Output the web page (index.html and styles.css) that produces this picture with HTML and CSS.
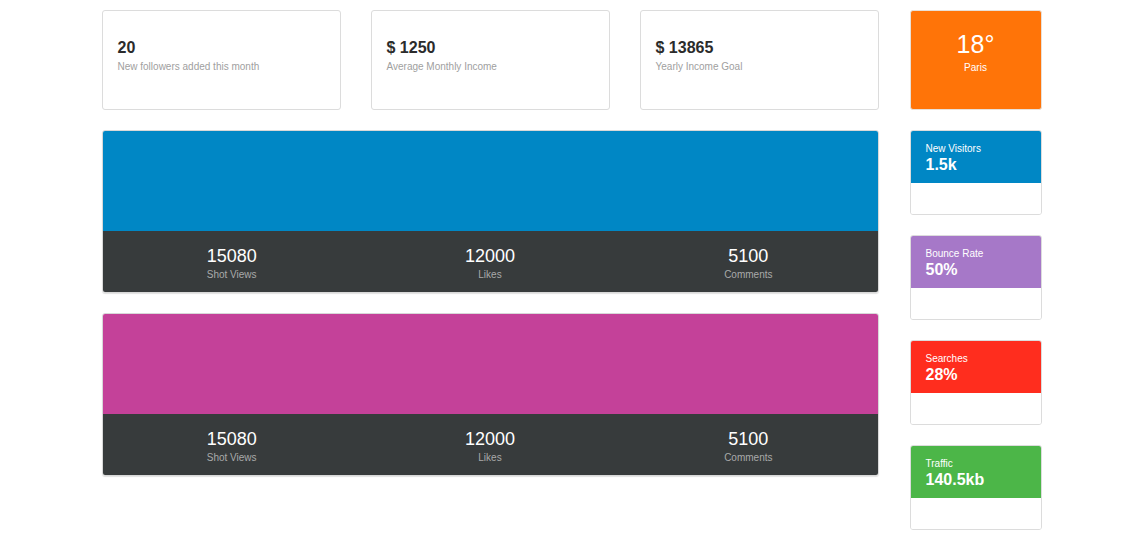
FILE: index.html
```html
<!DOCTYPE html>
<html>
<head>
<meta charset="utf-8">
<link rel="stylesheet" href="styles.css">
</head>
<body>
<div class="container">
  <div class="main">
    <div class="tiles">
      <div class="tile"><div class="tile-value">20</div><div class="tile-label">New followers added this month</div></div>
      <div class="tile"><div class="tile-value">$ 1250</div><div class="tile-label">Average Monthly Income</div></div>
      <div class="tile"><div class="tile-value">$ 13865</div><div class="tile-label">Yearly Income Goal</div></div>
    </div>
    <div class="chart-card">
      <div class="chart chart-blue"></div>
      <div class="stats">
        <div class="stat"><div class="stat-num">15080</div><div class="stat-label">Shot Views</div></div>
        <div class="stat"><div class="stat-num">12000</div><div class="stat-label">Likes</div></div>
        <div class="stat"><div class="stat-num">5100</div><div class="stat-label">Comments</div></div>
      </div>
    </div>
    <div class="chart-card">
      <div class="chart chart-pink"></div>
      <div class="stats">
        <div class="stat"><div class="stat-num">15080</div><div class="stat-label">Shot Views</div></div>
        <div class="stat"><div class="stat-num">12000</div><div class="stat-label">Likes</div></div>
        <div class="stat"><div class="stat-num">5100</div><div class="stat-label">Comments</div></div>
      </div>
    </div>
  </div>
  <div class="side">
    <div class="weather"><div class="temp">18°</div><div class="city">Paris</div></div>
    <div class="mini"><div class="mini-head blue"><div class="mini-title">New Visitors</div><div class="mini-value">1.5k</div></div><div class="mini-body"></div></div>
    <div class="mini"><div class="mini-head purple"><div class="mini-title">Bounce Rate</div><div class="mini-value">50%</div></div><div class="mini-body"></div></div>
    <div class="mini"><div class="mini-head red"><div class="mini-title">Searches</div><div class="mini-value">28%</div></div><div class="mini-body"></div></div>
    <div class="mini"><div class="mini-head green"><div class="mini-title">Traffic</div><div class="mini-value">140.5kb</div></div><div class="mini-body"></div></div>
  </div>
</div>
</body>
</html>
```

FILE: styles.css
```css
* { box-sizing: border-box; }
html, body { margin: 0; padding: 0; background: #fff; }
body {
  font-family: "Liberation Sans", Arial, Helvetica, sans-serif;
  color: #333;
  padding-top: 10px;
}
.container {
  width: 940px;
  margin: 0 auto;
  display: grid;
  grid-template-columns: 777px 132px;
  column-gap: 31px;
  align-items: start;
}
.main { display: flex; flex-direction: column; gap: 20px; }
.tiles { display: grid; grid-template-columns: repeat(3, 1fr); gap: 30px; }
.tile {
  height: 100px;
  border: 1px solid #dcdcdc;
  border-radius: 3px;
  padding: 28px 15px 0;
}
.tile-value { font-size: 16px; font-weight: bold; color: #2b2b2b; line-height: 18px; }
.tile-label { font-size: 10px; color: #a0a0a0; margin-top: 4px; line-height: 12px; }

.chart-card {
  border-radius: 3px;
  overflow: hidden;
  box-shadow: 0 1px 1px rgba(0,0,0,0.12);
  border: 1px solid #d8d8d8;
}
.chart { height: 100px; }
.chart-blue { background: #0087c5; }
.chart-pink { background: #c44199; }
.stats {
  background: #373b3c;
  height: 61px;
  display: grid;
  grid-template-columns: repeat(3, 1fr);
  text-align: center;
  padding-top: 15px;
}
.stat-num { color: #fff; font-size: 18px; line-height: 20px; }
.stat-label { color: #a9aaaa; font-size: 10px; line-height: 12px; margin-top: 3px; }

.side { display: flex; flex-direction: column; gap: 20px; }
.weather {
  height: 100px;
  background: #ff7408;
  border: 1px solid #e8e0d8;
  border-radius: 3px;
  color: #fff;
  text-align: center;
  padding-top: 19px;
}
.temp { font-size: 25px; line-height: 28px; }
.city { font-size: 10px; margin-top: 4px; }
.mini {
  height: 85px;
  border: 1px solid #dcdcdc;
  border-radius: 3px;
  overflow: hidden;
  display: flex;
  flex-direction: column;
}
.mini-head { height: 52px; color: #fff; padding: 12px 15px 0; }
.mini-title { font-size: 10px; line-height: 12px; }
.mini-value { font-size: 16px; font-weight: bold; line-height: 18px; margin-top: 1px; }
.mini-body { flex: 1; background: #fff; }
.blue { background: #0087c5; }
.purple { background: #a678c8; }
.red { background: #ff2d1e; }
.green { background: #4cb648; }
```
